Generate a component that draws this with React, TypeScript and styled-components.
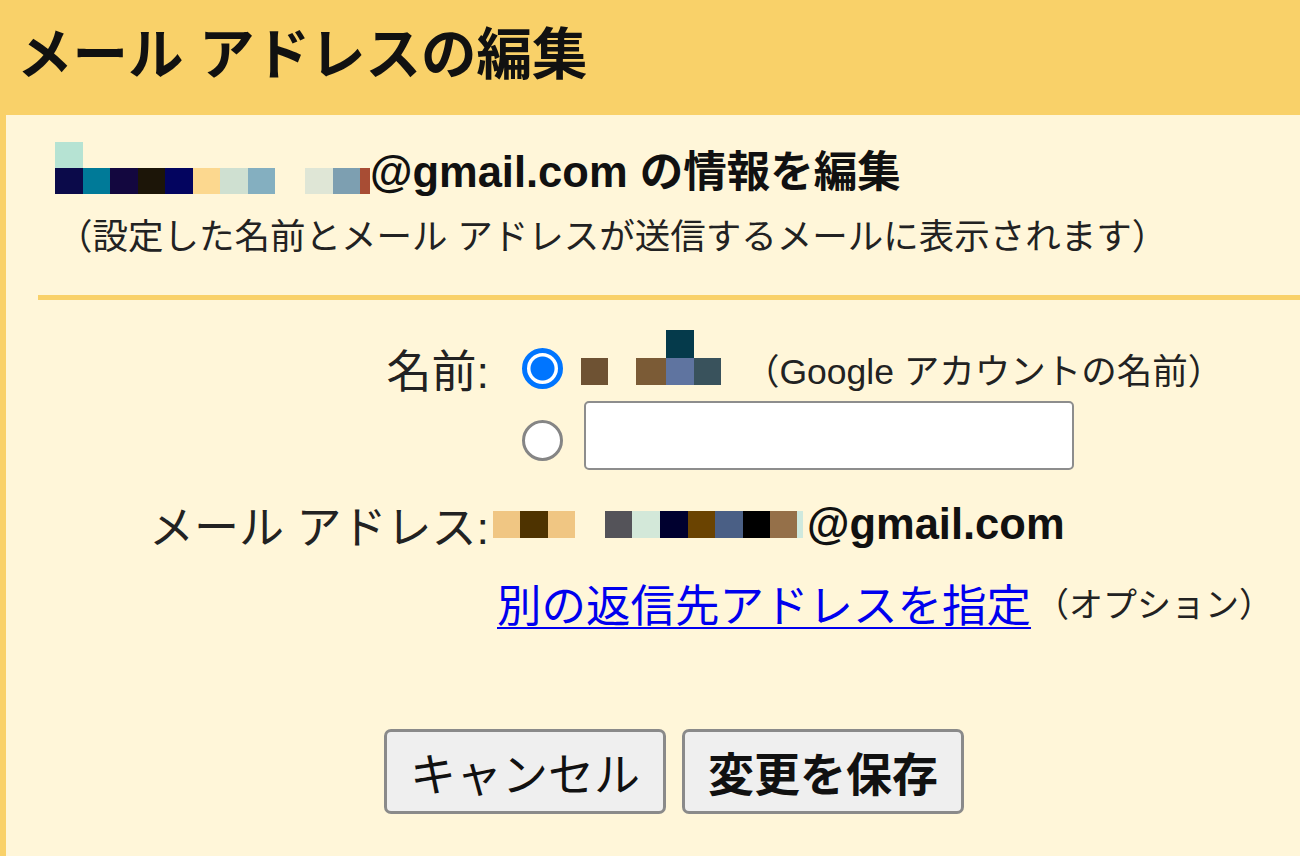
import styled, { createGlobalStyle } from 'styled-components';

const GlobalStyle = createGlobalStyle`
  html, body {
    margin: 0;
    padding: 0;
    background: #fff6d9;
  }
  body {
    font-family: 'Liberation Sans', 'Noto Sans CJK JP', sans-serif;
    color: #1c1c1c;
  }
`;

const Page = styled.div`
  width: 1300px;
  height: 856px;
  overflow: hidden;
  display: flex;
  flex-direction: column;
  background: #fff6d9;
`;

const Header = styled.header`
  height: 115px;
  flex: none;
  background: #f9d169;
  display: flex;
  align-items: center;
  padding: 0 0 4px 17px;
  box-sizing: border-box;
`;

const Title = styled.h1`
  margin: 0;
  font-size: 55.5px;
  font-weight: 700;
  line-height: 1;
  color: #111;
`;

const Body = styled.main`
  flex: 1;
  border-left: 6px solid #f9d169;
`;

const Intro = styled.section`
  padding: 27px 0 0 49px;
`;

const IntroLine = styled.div`
  display: flex;
  align-items: flex-end;
  font-size: 43.5px;
  font-weight: 700;
  line-height: 1;
  color: #111;
`;

const Note = styled.p`
  margin: 22px 0 0 2px;
  font-size: 35.5px;
  line-height: 1.2;
  color: #222;
`;

const Divider = styled.hr`
  margin: 36px 0 0 32px;
  border: none;
  height: 5px;
  background: #f9d169;
`;

const Form = styled.div`
  margin-top: 36px;
  display: grid;
  grid-template-columns: 483px 1fr;
  grid-template-rows: 66px 68px 110px 46px;
  column-gap: 4px;
  align-items: center;
`;

const Label = styled.div`
  grid-column: 1;
  justify-self: end;
  font-size: 45px;
  color: #222;
  white-space: nowrap;
`;

const Field = styled.div`
  grid-column: 2;
  display: flex;
  align-items: center;
  white-space: nowrap;
`;

const Radio = styled.input.attrs({ type: 'radio' })<{ $drop?: number }>`
  appearance: none;
  margin: ${({ $drop }) => $drop ?? 0}px 0 0 29px;
  width: 41px;
  height: 41px;
  flex: none;
  box-sizing: border-box;
  border-radius: 50%;
  border: 3px solid #858585;
  background: #fff;
  &:checked {
    border: 5px solid #0075ff;
    background: radial-gradient(circle, #0075ff 0 11.5px, #fff 12.5px);
  }
`;

const TextBox = styled.input`
  margin-left: 21px;
  width: 490px;
  height: 69px;
  box-sizing: border-box;
  border: 2px solid #8d8d8d;
  border-radius: 5px;
  background: #fff;
`;

const Hint = styled.span<{ $gap?: number; $size?: number }>`
  margin-left: ${({ $gap }) => $gap ?? 0}px;
  font-size: ${({ $size }) => $size ?? 34.5}px;
  color: #222;
`;

const BoldAddress = styled.span`
  margin-left: 4px;
  font-size: 43.5px;
  font-weight: 700;
  color: #111;
`;

const ReplyLink = styled.a`
  margin-left: 4px;
  font-size: 44.5px;
  color: #0000ee;
  text-decoration: underline;
  text-decoration-thickness: 2px;
  text-underline-offset: 5px;
`;

const Actions = styled.div`
  margin: 103px 0 0 378px;
  display: flex;
  gap: 16px;
`;

const Button = styled.button<{ $primary?: boolean }>`
  height: 85px;
  padding: 0 23px;
  box-sizing: border-box;
  font-family: inherit;
  font-size: 46px;
  font-weight: ${({ $primary }) => ($primary ? 700 : 400)};
  color: #111;
  background: #efefef;
  border: 3px solid #8a8a8a;
  border-radius: 7px;
`;

const MosaicGrid = styled.span<{ $cols: string; $rows: string }>`
  display: inline-grid;
  flex: none;
  grid-template-columns: ${({ $cols }) => $cols};
  grid-template-rows: ${({ $rows }) => $rows};
`;

const Cell = styled.span<{ $c: string | null }>`
  background: ${({ $c }) => $c ?? 'transparent'};
`;

const Blur = styled.span<{ $ml?: number; $mb?: number }>`
  display: inline-flex;
  flex: none;
  margin-left: ${({ $ml }) => $ml ?? 0}px;
  margin-bottom: ${({ $mb }) => $mb ?? 0}px;
`;

type MosaicProps = { cols: number[]; rows: number[]; cells: (string | null)[][]; ml?: number; mb?: number };

// pixelated (censored) parts of the name and address
const Mosaic = ({ cols, rows, cells, ml, mb }: MosaicProps) => (
  <Blur $ml={ml} $mb={mb} aria-hidden>
    <MosaicGrid $cols={cols.map((c) => `${c}px`).join(' ')} $rows={rows.map((r) => `${r}px`).join(' ')}>
      {cells.flatMap((row, r) => row.map((c, i) => <Cell key={`${r}-${i}`} $c={c} />))}
    </MosaicGrid>
  </Blur>
);

const _ = null;

const introCells = [
  ['#b6e3d3', _, _, _, _, _, _, _, _, _, _, _],
  ['#0b0a4a', '#007a98', '#13073f', '#1c1508', '#03045f', '#fcd88f', '#cfe0d1', '#84afc0', _, '#dfe6d6', '#7d9fb1', '#a84d34'],
];

const nameCells = [
  [_, _, _, '#053a4b', _],
  ['#6e5233', _, '#7b5b36', '#5f74a0', '#39525c'],
];

const emailCells = [
  ['#f0c683', '#4e3300', '#f0c683', _, '#545359', '#d3e8d9', '#00002f', '#6a4301', '#4a5f85', '#000000', '#957049', '#cfe9de'],
];

export default function App() {
  return (
    <>
      <GlobalStyle />
      <Page>
        <Header>
          <Title>メール アドレスの編集</Title>
        </Header>
        <Body>
          <Intro>
            <IntroLine>
              <Mosaic
                cols={[27.5, 27.5, 27.5, 27.5, 27.5, 27.5, 27.5, 27.5, 30, 27.5, 27.5, 10]}
                rows={[26, 26]}
                cells={introCells}
              />
              <span>@gmail.com の情報を編集</span>
            </IntroLine>
            <Note>（設定した名前とメール アドレスが送信するメールに表示されます）</Note>
          </Intro>
          <Divider />
          <Form>
            <Label>名前:</Label>
            <Field>
              <Radio name="name" defaultChecked />
              <Mosaic ml={18} mb={22} cols={[27, 28, 30, 28, 27]} rows={[28, 27]} cells={nameCells} />
              <Hint $gap={23} $size={35.5}>（Google アカウントの名前）</Hint>
            </Field>
            <Field>
              <Radio name="name" $drop={10} />
              <TextBox type="text" />
            </Field>
            <Label>メール アドレス:</Label>
            <Field>
              <Mosaic cols={[27, 28, 27, 30, 27, 28, 28, 27, 28, 27, 27, 6]} rows={[27]} cells={emailCells} />
              <BoldAddress>@gmail.com</BoldAddress>
            </Field>
            <Field>
              <ReplyLink href="#">別の返信先アドレスを指定</ReplyLink>
              <Hint $gap={4} $size={34}>（オプション）</Hint>
            </Field>
          </Form>
          <Actions>
            <Button>キャンセル</Button>
            <Button $primary>変更を保存</Button>
          </Actions>
        </Body>
      </Page>
    </>
  );
}
